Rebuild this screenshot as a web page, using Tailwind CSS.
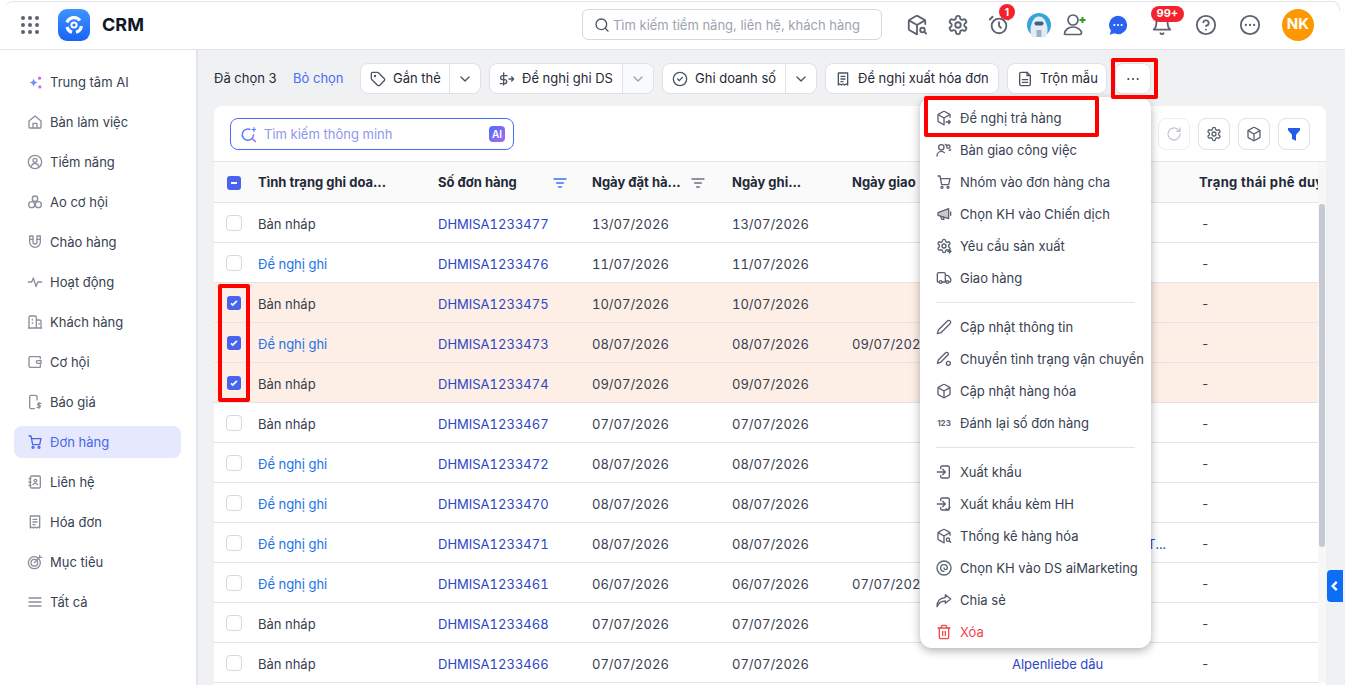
<!DOCTYPE html>
<html lang="vi">
<head>
  <meta charset="UTF-8">
  <title>CRM - Đơn hàng</title>
  <script src="https://cdn.jsdelivr.net/npm/@tailwindcss/browser@4"></script>
</head>
<body class="h-[685px] overflow-hidden bg-white font-[Inter,sans-serif] text-[13px] text-[#374151]">

  <!-- window edge -->
  <div class="absolute left-[5px] right-[5px] top-[1px] h-[10px] rounded-t-lg border-t border-r border-[#e2e4e9]"></div>

  <!-- top bar -->
  <header class="flex h-[50px] items-center border-b border-[#e2e4e9]">
    <div class="ml-[21px] grid w-[18px] grid-cols-3 gap-[3px]">
      <i class="size-1 rounded-full bg-[#5c6270]"></i><i class="size-1 rounded-full bg-[#5c6270]"></i><i class="size-1 rounded-full bg-[#5c6270]"></i>
      <i class="size-1 rounded-full bg-[#5c6270]"></i><i class="size-1 rounded-full bg-[#5c6270]"></i><i class="size-1 rounded-full bg-[#5c6270]"></i>
      <i class="size-1 rounded-full bg-[#5c6270]"></i><i class="size-1 rounded-full bg-[#5c6270]"></i><i class="size-1 rounded-full bg-[#5c6270]"></i>
    </div>
    <div class="ml-[19px] flex size-8 items-center justify-center rounded-[9px] bg-gradient-to-b from-[#3f93ff] to-[#1b62f6]">
      <svg viewBox="0 0 24 24" class="size-6" fill="none" stroke="#fff"><circle cx="12" cy="12" r="2.6" stroke-width="2"/><path d="M5 9.5A7.5 7.5 0 0 1 18 7.5M19.4 13a7.5 7.5 0 0 1-5.4 6.2M10 19.3A7.5 7.5 0 0 1 5 14" stroke-width="3.2"/></svg>
    </div>
    <span class="ml-3 text-[18px] font-bold text-[#111827]">CRM</span>
    <div class="ml-[438px] flex h-[31px] w-[300px] items-center rounded-md border border-[#d5d8de] pl-[11px] text-[#9ca3af]">
      <svg data-i="search" class="size-4 text-[#4b5563]"></svg>
      <span class="ml-[3px] pt-[2px]">Tìm kiếm tiềm năng, liên hệ, khách hàng</span>
    </div>
    <div class="ml-[15px] flex items-center text-[#5b6271]">
      <span class="flex w-10 justify-center"><svg data-i="cubesearch" class="size-[22px]"></svg></span>
      <span class="flex w-[42px] justify-center"><svg data-i="gear" class="size-[22px]"></svg></span>
      <span class="relative flex w-10 justify-center"><svg data-i="clock" class="size-[22px]"></svg>
        <b class="absolute -top-[10px] left-[20px] flex size-4 items-center justify-center rounded-full bg-[#f5222d] text-[10px] leading-none text-white">1</b></span>
      <span class="flex w-[40px] justify-center">
        <svg viewBox="0 0 24 24" class="size-6"><circle cx="12" cy="12" r="12" fill="#35a4d8"/><path d="M5 24c-2-5-2-9-.5-13C6 6 8.500 3.500 12 3.500S18 6 19.500 11c1.500 4 1.500 8-.5 13z" fill="#e4ebf1"/><rect x="7.500" y="8.500" width="9" height="4" rx="2" fill="#3e5f8a"/><path d="M9.500 17h5v7h-5z" fill="#9db2c6"/></svg>
      </span>
      <span class="flex w-[32px] justify-center"><svg viewBox="0 0 24 24" class="size-6" fill="none" stroke="currentColor" stroke-width="1.700"><circle cx="10" cy="7" r="5"/><path d="M1.500 21c0-4 4-7 8.500-7s8.500 3 8.500 6c0 1-.8 1.500-1.500 1.500H3c-.8 0-1.500-.5-1.500-.5z"/><path d="M16.500 7h6M19.500 4v6" stroke="#2d9e1f" stroke-width="2"/></svg></span>
      <span class="ml-[5px] flex w-[44px] justify-center"><svg viewBox="0 0 24 24" class="size-[22px]"><path d="M12 2a10 10 0 0 1 0 20c-1.500 0-3-.3-4-.9L3 22.500l1.300-4.500A10 10 0 0 1 12 2z" fill="#2a62f4"/><circle cx="8" cy="12" r="1.200" fill="#fff"/><circle cx="12" cy="12" r="1.200" fill="#fff"/><circle cx="16" cy="12" r="1.200" fill="#fff"/></svg></span>
      <span class="relative flex w-[44px] justify-center"><svg data-i="bell" class="size-[22px]"></svg>
        <b class="absolute -top-[8px] left-[11px] flex h-[16px] w-[33px] items-center justify-center rounded-full bg-[#f5222d] text-[11px] leading-none text-white">99+</b></span>
      <span class="flex w-[44px] justify-center"><svg data-i="help" class="size-[22px]"></svg></span>
      <span class="flex w-[44px] justify-center"><svg data-i="more" class="size-[22px]"></svg></span>
      <span class="ml-[10px] flex size-8 items-center justify-center rounded-full bg-[#ff9800] text-[15px] font-bold text-white">NK</span>
    </div>
  </header>

  <div class="flex h-[635px]">
    <!-- left nav -->
    <nav id="nav" class="w-[198px] shrink-0 border-r-2 border-[#e2e4e9] px-[14px] pt-3"></nav>

    <main class="relative flex-1 bg-[#f0f1f3] pl-4 pr-[19px]">
      <!-- bulk action bar -->
      <div class="flex h-[56px] items-center pt-[1px]">
        <span class="w-[79px] text-[#1f2937]">Đã chọn 3</span>
        <span class="w-[67px] text-[#4a6cf7]">Bỏ chọn</span>
        <div class="flex h-[31px] w-[121px] items-center rounded-lg border border-[#dfe1e6] bg-white text-[#1f2937]">
          <svg data-i="tag" class="ml-[9px] size-4 text-[#4b5563]"></svg><span class="ml-[7px] flex-1">Gắn thẻ</span>
          <span class="flex h-full w-[31px] items-center justify-center border-l border-[#dfe1e6]"><svg data-i="down" class="size-4 text-[#4b5563]"></svg></span>
        </div>
        <div class="ml-2 flex h-[31px] w-[165px] items-center rounded-lg border border-[#dfe1e6] bg-white text-[#1f2937]">
          <svg data-i="money" class="ml-[9px] size-4 text-[#4b5563]"></svg><span class="ml-[7px] flex-1">Đề nghị ghi DS</span>
          <span class="flex h-full w-[31px] items-center justify-center rounded-r-lg border-l border-[#dfe1e6] bg-[#f9fafb]"><svg data-i="down" class="size-4 text-[#9ca3af]"></svg></span>
        </div>
        <div class="ml-2 flex h-[31px] w-[155px] items-center rounded-lg border border-[#dfe1e6] bg-white text-[#1f2937]">
          <svg data-i="checkcircle" class="ml-[9px] size-4 text-[#4b5563]"></svg><span class="ml-[7px] flex-1">Ghi doanh số</span>
          <span class="flex h-full w-[31px] items-center justify-center border-l border-[#dfe1e6]"><svg data-i="down" class="size-4 text-[#4b5563]"></svg></span>
        </div>
        <div class="ml-2 flex h-[31px] w-[174px] items-center rounded-lg border border-[#dfe1e6] bg-white text-[#1f2937]">
          <svg data-i="receipt" class="ml-[9px] size-4 text-[#4b5563]"></svg><span class="ml-[7px]">Đề nghị xuất hóa đơn</span>
        </div>
        <div class="ml-2 flex h-[31px] w-[100px] items-center rounded-lg border border-[#dfe1e6] bg-white text-[#1f2937]">
          <svg data-i="file" class="ml-[9px] size-4 text-[#4b5563]"></svg><span class="ml-[7px]">Trộn mẫu</span>
        </div>
        <div class="ml-2 flex h-[31px] w-[36px] items-center justify-center rounded-lg border border-[#dfe1e6] bg-white">
          <svg viewBox="0 0 24 24" class="size-4 text-[#374151]" fill="currentColor"><circle cx="5" cy="12" r="1.500"/><circle cx="12" cy="12" r="1.500"/><circle cx="19" cy="12" r="1.500"/></svg>
        </div>
      </div>

      <!-- list card -->
      <section class="h-[579px] overflow-hidden rounded-t-lg bg-white">
        <div class="flex h-[56px] items-start border-b border-[#e2e4e9] px-4 pt-3">
          <div class="flex h-8 w-[284px] items-center rounded-lg border border-[#4a6cf7] pl-[9px] pr-[8px] text-[#8f97ee]">
            <svg viewBox="0 0 24 24" class="size-[18px]" fill="none" stroke="#5b7cf7" stroke-width="2"><path d="M14 6.200a7.500 7.500 0 1 0 4 6.300"/><path d="m16 18 5 4.500" stroke="#a06cf0"/><path d="M18.500 3v6M15.500 6h6" stroke="#5b7cf7" stroke-width="1.600"/></svg>
            <span class="ml-[6px] flex-1 pt-[2px]">Tìm kiếm thông minh</span>
            <b class="flex size-4 items-center justify-center rounded-[4px] bg-gradient-to-br from-[#4a6cf7] to-[#a06cf0] text-[10px] font-semibold text-white">AI</b>
          </div>
          <div class="ml-auto flex gap-2">
            <span class="flex size-8 items-center justify-center rounded-lg border border-[#eceef1] text-[#c4c8cf]"><svg data-i="refresh" class="size-4"></svg></span>
            <span class="flex size-8 items-center justify-center rounded-lg border border-[#dfe1e6] text-[#5b6271]"><svg data-i="gear" class="size-4"></svg></span>
            <span class="flex size-8 items-center justify-center rounded-lg border border-[#dfe1e6] text-[#5b6271]"><svg data-i="cube" class="size-4"></svg></span>
            <span class="flex size-8 items-center justify-center rounded-lg border border-[#dfe1e6]"><svg viewBox="0 0 24 24" class="size-4" fill="#1f5fe8"><path d="M3 3h18v3.500l-6 6.500v9l-6-2.500V13L3 6.500z"/></svg></span>
          </div>
        </div>

        <div class="flex">
          <div class="w-[1104px] shrink-0 overflow-hidden">
            <!-- column heads -->
            <div class="flex h-[41px] items-center border-b border-[#e2e4e9] bg-[#fafafa] pt-[2px] font-bold text-[#1f2937]">
              <span class="flex w-[44px] justify-center pr-[4px]"><b class="flex size-[14px] items-center justify-center rounded-[3px] bg-[#4a63ee]"><i class="h-[2px] w-[6px] bg-white"></i></b></span>
              <span class="w-[180px]">Tình trạng ghi doa...</span>
              <span class="flex w-[154px] items-center">Số đơn hàng<svg data-i="lines" class="ml-[35px] size-4 text-[#3f6fe8]"></svg></span>
              <span class="flex w-[140px] items-center">Ngày đặt hà...<svg data-i="lines" class="ml-[9px] size-4 text-[#6b7280]"></svg></span>
              <span class="w-[120px]">Ngày ghi...</span>
              <span class="w-[160px]">Ngày giao</span>
              <span class="w-[187px]"></span>
              <span class="w-[119px] overflow-hidden whitespace-nowrap tracking-[0.35px]">Trạng thái phê duy</span>
            </div>
            <div id="rows"></div>
          </div>
          <!-- scrollbar -->
          <div class="w-2 flex-1 bg-[#f7f7f8] pl-[1px]">
            <div class="mt-[42px] h-[343px] w-[6px] rounded-full bg-[#c4c9d3]"></div>
          </div>
        </div>
      </section>

      <!-- collapse tab -->
      <span class="absolute right-[2px] top-[520px] flex h-8 w-4 items-center justify-center rounded-l-[4px] bg-[#0b6ef5] text-white">
        <svg viewBox="0 0 24 24" class="size-[14px]" fill="none" stroke="currentColor" stroke-width="4"><path d="m15 5-7 7 7 7"/></svg>
      </span>

      <!-- more actions menu -->
      <div id="menu" class="absolute left-[722px] top-[47px] w-[231px] rounded-xl bg-white pt-[5px] shadow-[0_3px_10px_rgba(0,0,0,0.3)]"></div>
    </main>
  </div>

  <!-- red callouts drawn over the screenshot -->
  <div class="absolute left-[1111px] top-[58px] h-[41px] w-[47px] rounded-[2px] border-4 border-[#f00]"></div>
  <div class="absolute left-[924px] top-[96px] h-[41px] w-[175px] rounded-[2px] border-4 border-[#f00]"></div>
  <div class="absolute left-[218px] top-[284px] h-[118px] w-[32px] rounded-[2px] border-4 border-[#f00]"></div>

  <script>
    const gearPath = '<path d="M12.220 2h-.44a2 2 0 0 0-2 2v.18a2 2 0 0 1-1 1.730l-.43.25a2 2 0 0 1-2 0l-.15-.08a2 2 0 0 0-2.730.73l-.22.38a2 2 0 0 0 .73 2.730l.15.1a2 2 0 0 1 1 1.720v.51a2 2 0 0 1-1 1.740l-.15.09a2 2 0 0 0-.73 2.730l.22.38a2 2 0 0 0 2.730.73l.15-.08a2 2 0 0 1 2 0l.43.25a2 2 0 0 1 1 1.730V20a2 2 0 0 0 2 2h.44a2 2 0 0 0 2-2v-.18a2 2 0 0 1 1-1.730l.43-.25a2 2 0 0 1 2 0l.15.08a2 2 0 0 0 2.730-.73l.22-.39a2 2 0 0 0-.73-2.730l-.15-.08a2 2 0 0 1-1-1.740v-.5a2 2 0 0 1 1-1.740l.15-.09a2 2 0 0 0 .73-2.730l-.22-.38a2 2 0 0 0-2.730-.73l-.15.08a2 2 0 0 1-2 0l-.43-.25a2 2 0 0 1-1-1.730V4a2 2 0 0 0-2-2z"/><circle cx="12" cy="12" r="3"/>';
    const cubeOpen = '<path d="M21 11V8a2 2 0 0 0-1-1.730l-7-4a2 2 0 0 0-2 0l-7 4A2 2 0 0 0 3 8v8a2 2 0 0 0 1 1.730l7 4a2 2 0 0 0 1 .27"/><path d="M3.300 7 12 12l8.700-5M12 22V12"/>';
    const exportPath = '<path d="M9 3h9a2 2 0 0 1 2 2v14a2 2 0 0 1-2 2H9a2 2 0 0 1-2-2v-2M7 7V5a2 2 0 0 1 2-2"/><path d="M2 12h11M10 8l4 4-4 4"/>';
    const icons = {
      search: '<circle cx="11" cy="11" r="8"/><path d="m21 21-4.300-4.300"/>',
      gear: gearPath,
      cube: '<path d="M21 8a2 2 0 0 0-1-1.730l-7-4a2 2 0 0 0-2 0l-7 4A2 2 0 0 0 3 8v8a2 2 0 0 0 1 1.730l7 4a2 2 0 0 0 2 0l7-4A2 2 0 0 0 21 16z"/><path d="M3.300 7 12 12l8.700-5M12 22V12"/>',
      cubesearch: cubeOpen + '<circle cx="18" cy="17.500" r="2.500"/><path d="m20 19.500 2 2"/>',
      cubearrow: cubeOpen + '<path d="M15 18h6M19 15.500l2.500 2.500-2.500 2.500"/>',
      clock: '<circle cx="12" cy="13" r="8"/><path d="M12 9v4l2 2M5 3 2 6M22 6l-3-3"/>',
      bell: '<path d="M6 8a6 6 0 0 1 12 0c0 7 3 9 3 9H3s3-2 3-9"/><path d="M10.300 21a1.940 1.940 0 0 0 3.400 0"/>',
      help: '<circle cx="12" cy="12" r="10"/><path d="M9.090 9a3 3 0 0 1 5.830 1c0 2-3 3-3 3M12 17h.01"/>',
      more: '<circle cx="12" cy="12" r="10"/><path d="M7.500 12h.01M12 12h.01M16.500 12h.01" stroke-width="2.500"/>',
      tag: '<path d="M12.600 2.600A2 2 0 0 0 11.200 2H4a2 2 0 0 0-2 2v7.200a2 2 0 0 0 .6 1.400l8.700 8.700a2.400 2.400 0 0 0 3.400 0l6.600-6.600a2.400 2.400 0 0 0 0-3.400z"/><circle cx="7.500" cy="7.500" r=".8"/>',
      down: '<path d="m6 9 6 6 6-6"/>',
      money: '<path d="M7 3v18M12 7H5.500a3 3 0 0 0 0 6h3a3 3 0 0 1 0 6H2"/><path d="M15 12h7M19 9l3 3-3 3"/>',
      checkcircle: '<circle cx="12" cy="12" r="10"/><path d="m8.500 12 2.500 2.500 4.500-5"/>',
      receipt: '<path d="M5 3h14v18l-2.300-1.500L14.300 21 12 19.500 9.700 21l-2.400-1.500L5 21z"/><path d="M9 8h6M9 12h6M9 16h3"/>',
      file: '<path d="M15 2H6a2 2 0 0 0-2 2v16a2 2 0 0 0 2 2h12a2 2 0 0 0 2-2V7z"/><path d="M15 2v5h5M8 13h8M8 17h8"/>',
      refresh: '<path d="M21 12a9 9 0 1 1-2.600-6.400L21 8"/><path d="M21 3v5h-5"/>',
      lines: '<path d="M3 6h18M7 12h10M10 18h4"/>',
      home: '<path d="M3 10.500 12 3l9 7.500V20a1 1 0 0 1-1 1H4a1 1 0 0 1-1-1z"/><path d="M9 21v-7h6v7"/>',
      usercircle: '<circle cx="12" cy="12" r="10"/><circle cx="12" cy="9.500" r="3"/><path d="M6.500 18.500c1-3 3-4.500 5.500-4.500s4.500 1.500 5.500 4.500"/>',
      pool: '<circle cx="12" cy="7" r="4"/><circle cx="7" cy="16" r="4.500"/><circle cx="17" cy="16" r="4.500"/>',
      magnet: '<path d="M4 3h5v9a3 3 0 0 0 6 0V3h5v9a8 8 0 0 1-16 0z"/><path d="M4 8h5M15 8h5"/>',
      activity: '<path d="M2 12h5l2.500-6 4 13 2.500-7h6"/>',
      building: '<path d="M3 21V5a2 2 0 0 1 2-2h7a2 2 0 0 1 2 2v16M14 9h5a2 2 0 0 1 2 2v10M2 21h20M8 8v1M8 13v1M18 14v1"/>',
      wallet: '<path d="M20 7V5a1 1 0 0 0-1-1H5a2 2 0 0 0-2 2v12a2 2 0 0 0 2 2h14a1 1 0 0 0 1-1v-3"/><path d="M21 10h-5a2 2 0 0 0 0 4h5z"/>',
      quote: '<path d="M15 9V4a2 2 0 0 0-2-2H6a2 2 0 0 0-2 2v16a2 2 0 0 0 2 2h5"/><path d="M21 14h-3.500a1.500 1.500 0 0 0 0 3h1a1.500 1.500 0 0 1 0 3H15M18 12.500v9"/>',
      cart: '<path d="M3 3h3l2.500 13H19l2-9H7"/><circle cx="9" cy="20" r="1.500"/><circle cx="18" cy="20" r="1.500"/>',
      contact: '<rect x="5" y="3" width="15" height="18" rx="2"/><circle cx="12.500" cy="10" r="2"/><path d="M9 16c.7-1.300 2-2 3.500-2s2.800.7 3.500 2M3 7h3M3 12h3M3 17h3"/>',
      target: '<circle cx="11" cy="13" r="9"/><circle cx="11" cy="13" r="5"/><path d="m11 13 8-8M19 5V2M19 5h3"/>',
      menu: '<path d="M3 6h18M3 12h18M3 18h18"/>',
      handover: '<circle cx="8" cy="8" r="4"/><path d="M1.500 21c0-4 3-7 6.500-7 2 0 3.500.8 4.500 2"/><circle cx="18.500" cy="7" r="2.500"/><path d="M14 3.500 15.500 5M22 11.500l-2 1"/>',
      megaphone: '<path d="m3 10 16-6v15L3 14z" fill="currentColor" fill-opacity=".35"/><path d="M7 15.500 8.500 20H12l-1-3.500M22 9v5"/>',
      gearout: gearPath + '<path d="M17 20h5M20 17.500l2.500 2.500-2.500 2.500"/>',
      truck: '<path d="M14 18V6a2 2 0 0 0-2-2H4a2 2 0 0 0-2 2v11a1 1 0 0 0 1 1h2M15 18H9M19 18h2a1 1 0 0 0 1-1v-3.650a1 1 0 0 0-.22-.62l-3.480-4.350A1 1 0 0 0 17.520 8H14"/><circle cx="17" cy="18" r="2"/><circle cx="7" cy="18" r="2"/>',
      pencil: '<path d="M17 3a2.850 2.830 0 1 1 4 4L7.500 20.500 2 22l1.500-5.500Z"/>',
      pencilcircle: '<path d="M14 3a2.500 2.500 0 1 1 3.500 3.500L7 17l-5 1.500L3.500 13.500Z"/><circle cx="18.500" cy="18.500" r="3"/>',
      exportin: exportPath,
      exportcheck: exportPath + '<path d="m15 19 2 2 4-4"/>',
      spiral: '<circle cx="12" cy="12" r="10.500"/><path d="M12 17a5 5 0 1 1 5-5c0 1.500-1 2.500-2.500 2.500S12 13.500 12 12"/>',
      share: '<path d="M14 4l8 6.500-8 6.500v-3.500C8 13.500 4 16 1.500 22 1.500 14 6 9 14 8.500z"/>',
      trash: '<path d="M3 6h18M19 6v14a2 2 0 0 1-2 2H7a2 2 0 0 1-2-2V6M8 6V4a2 2 0 0 1 2-2h4a2 2 0 0 1 2 2v2M10 11v6M14 11v6"/>'
    };

    const navItems = [
      ['sparkle', 'Trung tâm AI'], ['home', 'Bàn làm việc'], ['usercircle', 'Tiềm năng'], ['pool', 'Ao cơ hội'],
      ['magnet', 'Chào hàng'], ['activity', 'Hoạt động'], ['building', 'Khách hàng'], ['wallet', 'Cơ hội'],
      ['quote', 'Báo giá'], ['cart', 'Đơn hàng'], ['contact', 'Liên hệ'], ['receipt', 'Hóa đơn'],
      ['target', 'Mục tiêu'], ['menu', 'Tất cả']
    ];
    const sparkle = '<svg viewBox="0 0 24 24" class="size-[15px]"><path d="M9 5c.8 4 2.500 6 7 7-4.500 1-6.200 3-7 7-.8-4-2.500-6-7-7 4.500-1 6.200-3 7-7z" fill="#7c8df5"/><circle cx="18.500" cy="5" r="2.500" fill="#c46cf0"/><circle cx="19" cy="19" r="2.500" fill="#c46cf0"/></svg>';
    document.getElementById('nav').innerHTML = navItems.map(([ic, label]) => {
      const active = label === 'Đơn hàng';
      const svg = ic === 'sparkle' ? sparkle : `<svg data-i="${ic}" class="size-4 ${active ? 'text-[#4a63ee]' : 'text-[#8a8f9c]'}"></svg>`;
      return `<div class="flex h-10 items-center">
        <div class="flex h-8 w-[167px] items-center rounded-lg pl-[13px] ${active ? 'bg-[#e6e9fd] text-[#4a63ee]' : 'text-[#374151]'}">
          <span class="flex w-4 justify-center">${svg}</span><span class="ml-[7px] pt-[2px]">${label}</span>
        </div></div>`;
    }).join('');

    const rows = [
      ['Bản nháp', '477', '13/07/2026', '13/07/2026'],
      ['Đề nghị ghi', '476', '11/07/2026', '11/07/2026'],
      ['Bản nháp', '475', '10/07/2026', '10/07/2026', '', '', true],
      ['Đề nghị ghi', '473', '08/07/2026', '08/07/2026', '09/07/2026', '', true],
      ['Bản nháp', '474', '09/07/2026', '09/07/2026', '', '', true],
      ['Bản nháp', '467', '07/07/2026', '07/07/2026'],
      ['Đề nghị ghi', '472', '08/07/2026', '08/07/2026'],
      ['Đề nghị ghi', '470', '08/07/2026', '08/07/2026'],
      ['Đề nghị ghi', '471', '08/07/2026', '08/07/2026', '', 'long'],
      ['Đề nghị ghi', '461', '06/07/2026', '06/07/2026', '07/07/2026'],
      ['Bản nháp', '468', '07/07/2026', '07/07/2026'],
      ['Bản nháp', '466', '07/07/2026', '07/07/2026', '', 'Alpenliebe dâu']
    ];
    document.getElementById('rows').innerHTML = rows.map(r => {
      const sel = r[6];
      const box = sel
        ? '<b class="flex size-[14px] items-center justify-center rounded-[3px] bg-[#4a63ee]"><svg viewBox="0 0 24 24" class="size-[10px]" fill="none" stroke="#fff" stroke-width="4"><path d="m5 13 4 4 10-10"/></svg></b>'
        : '<b class="size-4 rounded-[4px] border border-[#d5d8de] bg-white"></b>';
      const prod = r[5] === 'long'
        ? '<span class="flex w-[154px] justify-end whitespace-nowrap text-[#2d46c4]">Alpenliebe dâu, Kẹo T...</span>'
        : `<span class="text-[#2d46c4]">${r[5] || ''}</span>`;
      return `<div class="flex h-10 items-center border-b border-[#e2e4e9] pt-[4px] tabular-nums ${sel ? 'bg-[#fdeee6]' : ''}">
        <span class="mb-[3px] flex w-[44px] justify-center pr-[4px]">${box}</span>
        <span class="w-[180px] ${r[0] === 'Đề nghị ghi' ? 'text-[#1a73e8]' : ''}">${r[0]}</span>
        <span class="w-[154px] text-[#2d46c4]">DHMISA1233${r[1]}</span>
        <span class="w-[140px]">${r[2]}</span>
        <span class="w-[120px]">${r[3]}</span>
        <span class="w-[160px]">${r[4] || ''}</span>
        <span class="w-[187px]">${prod}</span>
        <span class="w-[119px] pl-[2px]">-</span>
      </div>`;
    }).join('');

    const menuItems = [
      ['cubearrow', 'Đề nghị trả hàng'], ['handover', 'Bàn giao công việc'], ['cart', 'Nhóm vào đơn hàng cha'],
      ['megaphone', 'Chọn KH vào Chiến dịch'], ['gearout', 'Yêu cầu sản xuất'], ['truck', 'Giao hàng'], null,
      ['pencil', 'Cập nhật thông tin'], ['pencilcircle', 'Chuyển tình trạng vận chuyển'], ['cube', 'Cập nhật hàng hóa'],
      ['123', 'Đánh lại số đơn hàng'], null,
      ['exportin', 'Xuất khẩu'], ['exportcheck', 'Xuất khẩu kèm HH'], ['cubesearch', 'Thống kê hàng hóa'],
      ['spiral', 'Chọn KH vào DS aiMarketing'], ['share', 'Chia sẻ'], ['trash', 'Xóa']
    ];
    document.getElementById('menu').innerHTML = menuItems.map(m => {
      if (!m) return '<div class="mx-4 my-2 h-px w-[199px] bg-[#e2e4e9]"></div>';
      const red = m[0] === 'trash';
      const ic = m[0] === '123'
        ? '<b class="text-[8px] font-bold leading-none text-[#5b6271]">123</b>'
        : `<svg data-i="${m[0]}" class="size-4 ${red ? 'text-[#f5424d]' : 'text-[#5b6271]'}"></svg>`;
      return `<div class="flex h-8 items-center whitespace-nowrap pl-4 ${red ? 'text-[#f5424d]' : 'text-[#374151]'}">
        <span class="flex w-4 justify-center">${ic}</span><span class="ml-2 pt-[2px]">${m[1]}</span></div>`;
    }).join('');

    // fill every named icon once the lists above are in the page
    document.querySelectorAll('svg[data-i]').forEach(el => {
      el.setAttribute('viewBox', '0 0 24 24');
      el.setAttribute('fill', 'none');
      el.setAttribute('stroke', 'currentColor');
      el.setAttribute('stroke-width', '2');
      el.setAttribute('stroke-linecap', 'round');
      el.setAttribute('stroke-linejoin', 'round');
      el.innerHTML = icons[el.dataset.i];
    });
  </script>
</body>
</html>
